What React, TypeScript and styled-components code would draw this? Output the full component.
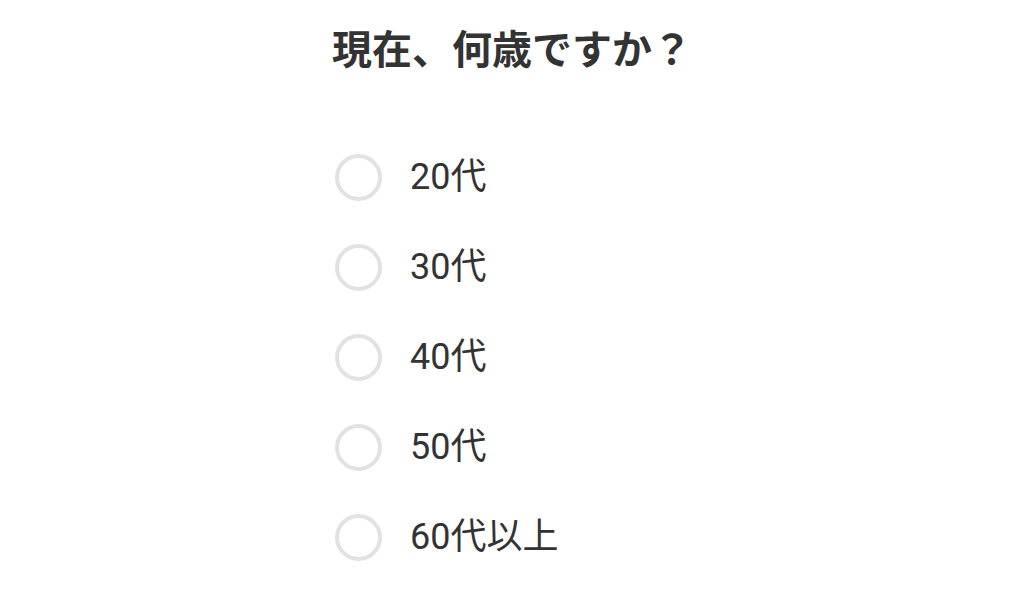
import styled, { createGlobalStyle } from "styled-components";

const GlobalStyle = createGlobalStyle`
  html, body {
    margin: 0;
    padding: 0;
    background: #ffffff;
  }
  body {
    font-family: Roboto, "Noto Sans CJK JP", sans-serif;
    color: #333333;
  }
`;

const Page = styled.div`
  display: flex;
  justify-content: center;
  padding-top: 21px;
`;

const Form = styled.div`
  display: flex;
  flex-direction: column;
`;

const Title = styled.h1`
  margin: 0;
  font-family: "Noto Sans CJK JP", sans-serif;
  font-size: 40px;
  font-weight: 700;
  line-height: 52px;
  color: #333333;
`;

const Options = styled.div`
  display: flex;
  flex-direction: column;
  margin-top: 81px;
  padding-left: 3px;
  gap: 43px;
`;

const Option = styled.label`
  display: flex;
  align-items: center;
  gap: 28px;
  cursor: pointer;
`;

const Radio = styled.span`
  box-sizing: border-box;
  width: 47px;
  height: 47px;
  border-radius: 50%;
  border: 4px solid #e2e2e2;
  flex-shrink: 0;
`;

const Label = styled.span`
  font-family: Roboto, "Noto Sans CJK JP", sans-serif;
  font-size: 36px;
  line-height: 47px;
  color: #333333;
`;

const ages = ["20代", "30代", "40代", "50代", "60代以上"];

export default function App() {
  return (
    <>
      <GlobalStyle />
      <Page>
        <Form>
          <Title>現在、何歳ですか？</Title>
          <Options>
            {ages.map((a) => (
              <Option key={a}>
                <Radio />
                <Label>{a}</Label>
              </Option>
            ))}
          </Options>
        </Form>
      </Page>
    </>
  );
}
